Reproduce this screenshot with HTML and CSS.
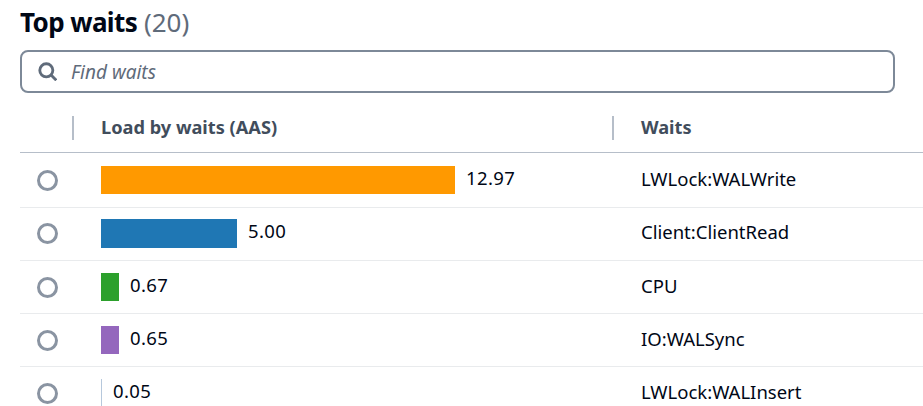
FILE: index.html
```html
<!DOCTYPE html>
<html lang="en">
<head>
<meta charset="utf-8">
<title>Top waits</title>
<link rel="stylesheet" href="styles.css">
</head>
<body>
<main class="panel">
  <h2 class="title"><span class="title-main">Top waits</span> <span class="count">(20)</span></h2>
  <div class="search">
    <svg class="search-icon" viewBox="0 0 16 16" width="19" height="19" aria-hidden="true"><circle cx="7" cy="7" r="5.5" fill="none" stroke="#5f6b7a" stroke-width="2.4"/><path d="M11 11l4.4 4.4" fill="none" stroke="#5f6b7a" stroke-width="2.4"/></svg>
    <span class="placeholder">Find waits</span>
  </div>
  <div class="table">
    <div class="row head">
      <div class="c-select"></div>
      <div class="c-load"><span class="head-text">Load by waits (AAS)</span></div>
      <div class="c-name"><span class="head-text">Waits</span></div>
    </div>
    <div class="row first">
      <div class="c-select"><span class="radio"></span></div>
      <div class="c-load"><span class="bar orange"></span><span class="val">12.97</span></div>
      <div class="c-name">LWLock:WALWrite</div>
    </div>
    <div class="row second">
      <div class="c-select"><span class="radio"></span></div>
      <div class="c-load"><span class="bar blue"></span><span class="val">5.00</span></div>
      <div class="c-name">Client:ClientRead</div>
    </div>
    <div class="row">
      <div class="c-select"><span class="radio"></span></div>
      <div class="c-load"><span class="bar green"></span><span class="val">0.67</span></div>
      <div class="c-name">CPU</div>
    </div>
    <div class="row">
      <div class="c-select"><span class="radio"></span></div>
      <div class="c-load"><span class="bar purple"></span><span class="val">0.65</span></div>
      <div class="c-name">IO:WALSync</div>
    </div>
    <div class="row">
      <div class="c-select"><span class="radio"></span></div>
      <div class="c-load"><span class="bar thin"></span><span class="val">0.05</span></div>
      <div class="c-name">LWLock:WALInsert</div>
    </div>
  </div>
</main>
</body>
</html>
```
FILE: styles.css
```css
html, body {
  margin: 0;
  padding: 0;
  height: 406px;
  overflow: hidden;
  background: #fff;
}
body {
  font-family: "Noto Sans", "Open Sans", sans-serif;
  font-size: 18.5px;
  color: #000716;
}
.panel {
  padding: 5px 0 0 20px;
}
.title {
  margin: 0;
  font-size: 26px;
  line-height: 35px;
  font-weight: 700;
  color: #000716;
}
.title-main {
  letter-spacing: -0.6px;
}
.count {
  font-weight: 400;
  color: #5f6b7a;
}
.search {
  box-sizing: border-box;
  width: 875px;
  height: 43px;
  margin-top: 10px;
  padding-left: 16px;
  display: flex;
  align-items: center;
  gap: 14px;
  border: 2px solid #7d8998;
  border-radius: 8px;
}
.search-icon {
  flex: none;
}
.placeholder {
  font-style: italic;
  font-size: 19px;
  color: #5f6b7a;
}
.table {
  margin-top: 12px;
}
.row {
  display: grid;
  grid-template-columns: 52px 540px 1fr;
  height: 53px;
  align-items: center;
  border-bottom: 1px solid #e9ebed;
  box-sizing: border-box;
}
.row.first {
  height: 55px;
}
.row.second {
  padding-bottom: 1px;
}
.row.head {
  height: 48px;
  align-items: start;
  padding-top: 11px;
  border-bottom-color: #b6bec9;
}
.head-text {
  display: block;
  padding-left: 27px;
  border-left: 2px solid #b6bec9;
  height: 24px;
  line-height: 22px;
  font-size: 18.2px;
  font-weight: 700;
  color: #414d5c;
}
.radio {
  display: block;
  box-sizing: border-box;
  width: 21px;
  height: 21px;
  margin-left: 17px;
  border: 3px solid #8a94a2;
  border-radius: 50%;
}
.c-load {
  display: flex;
  align-items: center;
}
.row:not(.head) .c-load {
  padding-left: 29px;
}
.row:not(.head) .c-name {
  padding-left: 29px;
  padding-bottom: 4px;
}
.bar {
  display: block;
  height: 28px;
  flex: none;
}
.second .bar {
  height: 29px;
}
.val {
  margin-left: 11px;
  padding-bottom: 6px;
  letter-spacing: 0.4px;
}
.orange { width: 354px; background: #ff9900; }
.blue { width: 136px; background: #1f77b4; }
.green { width: 18px; background: #2ca02c; }
.purple { width: 18px; background: #9467bd; }
.thin { width: 1px; background: #b6c8dc; }
```
